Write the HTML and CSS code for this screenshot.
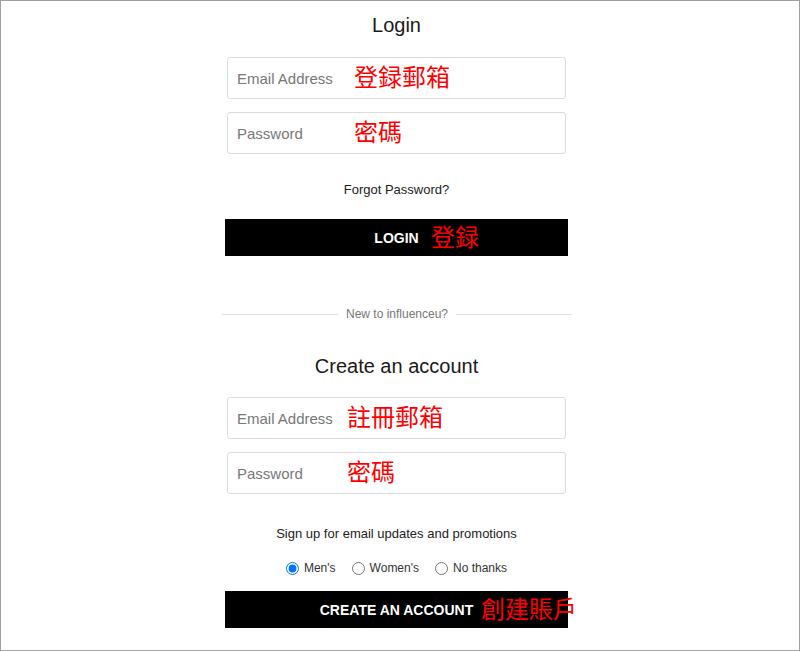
FILE: index.html
```html
<!DOCTYPE html>
<html lang="en">
<head>
  <meta charset="UTF-8">
  <title>Login</title>
  <link rel="stylesheet" href="styles.css">
</head>
<body>

  <div class="account">

    <h2 class="title">Login</h2>

    <form class="form login-form">
      <div class="field">
        <input type="email" placeholder="Email Address">
        <span class="note">登録郵箱</span>
      </div>
      <div class="field">
        <input type="password" placeholder="Password">
        <span class="note">密碼</span>
      </div>

      <a class="forgot" href="#">Forgot Password?</a>

      <button type="button" class="btn">
        LOGIN
        <span class="note note-login">登録</span>
      </button>
    </form>

    <div class="divider"><span>New to influenceu?</span></div>

    <h2 class="title">Create an account</h2>

    <form class="form signup-form">
      <div class="field">
        <input type="email" placeholder="Email Address">
        <span class="note">註冊郵箱</span>
      </div>
      <div class="field">
        <input type="password" placeholder="Password">
        <span class="note">密碼</span>
      </div>

      <p class="promo">Sign up for email updates and promotions</p>

      <div class="radios">
        <label><input type="radio" name="promo" checked> Men's</label>
        <label><input type="radio" name="promo"> Women's</label>
        <label><input type="radio" name="promo"> No thanks</label>
      </div>

      <button type="button" class="btn">
        CREATE AN ACCOUNT
        <span class="note note-create">創建賬戶</span>
      </button>
    </form>

  </div>

</body>
</html>
```

FILE: styles.css
```css
html, body {
  height: 100%;
}

body {
  margin: 0;
  box-sizing: border-box;
  border: 1px solid #a0a0a0;
  font-family: "Liberation Sans", Arial, sans-serif;
  color: #222;
  background: #fff;
  overflow: hidden;
}

.account {
  width: 343px;
  margin-left: 224px;
}

.title {
  margin: 0;
  font-size: 20px;
  font-weight: normal;
  line-height: 24px;
  text-align: center;
  color: #1a1a1a;
}

.account > .title:first-child {
  margin-top: 12px;
}

.form {
  display: flex;
  flex-direction: column;
  align-items: center;
}

.login-form {
  margin-top: 20px;
}

.signup-form {
  margin-top: 19px;
}

.field {
  position: relative;
  width: 339px;
  margin-bottom: 13px;
}

.field input {
  display: block;
  width: 100%;
  height: 42px;
  box-sizing: border-box;
  padding: 0 9px;
  border: 1px solid #dcdcdc;
  border-radius: 3px;
  font-family: "Liberation Sans", Arial, sans-serif;
  font-size: 15px;
  color: #333;
  outline: none;
}

.field input::placeholder {
  color: #777;
}

.note {
  position: absolute;
  font-family: "Noto Sans CJK TC", "Noto Sans CJK JP", sans-serif;
  font-size: 24px;
  font-weight: normal;
  line-height: 30px;
  color: #f00;
  white-space: nowrap;
  pointer-events: none;
}

.field .note {
  left: 127px;
  top: 4px;
}

.signup-form .field .note {
  left: 120px;
}

.forgot {
  margin-top: 15px;
  font-size: 13px;
  line-height: 16px;
  color: #222;
  text-decoration: none;
}

.btn {
  position: relative;
  width: 343px;
  height: 37px;
  margin-top: 21px;
  border: none;
  background: #000;
  color: #fff;
  font-family: "Liberation Sans", Arial, sans-serif;
  font-size: 14px;
  font-weight: bold;
  cursor: pointer;
}

.note-login {
  left: 206px;
  top: 2px;
}

.note-create {
  left: 256px;
  top: 2px;
}

.divider {
  display: flex;
  align-items: center;
  gap: 8px;
  width: 350px;
  margin: 51px 0 0 -3px;
  font-size: 12px;
  line-height: 14px;
  color: #777;
}

.divider::before,
.divider::after {
  content: "";
  flex: 1;
  border-top: 1px solid #e2e2e2;
}

.account > .divider + .title {
  margin-top: 33px;
}

.promo {
  margin: 19px 0 0;
  font-size: 13px;
  line-height: 16px;
  color: #222;
}

.radios {
  display: flex;
  gap: 16px;
  margin-top: 18px;
  font-size: 12px;
  line-height: 16px;
  color: #333;
}

.radios label {
  display: flex;
  align-items: center;
  gap: 5px;
}

.radios input {
  margin: 0;
  width: 13px;
  height: 13px;
}

.signup-form .btn {
  margin-top: 15px;
}
```
